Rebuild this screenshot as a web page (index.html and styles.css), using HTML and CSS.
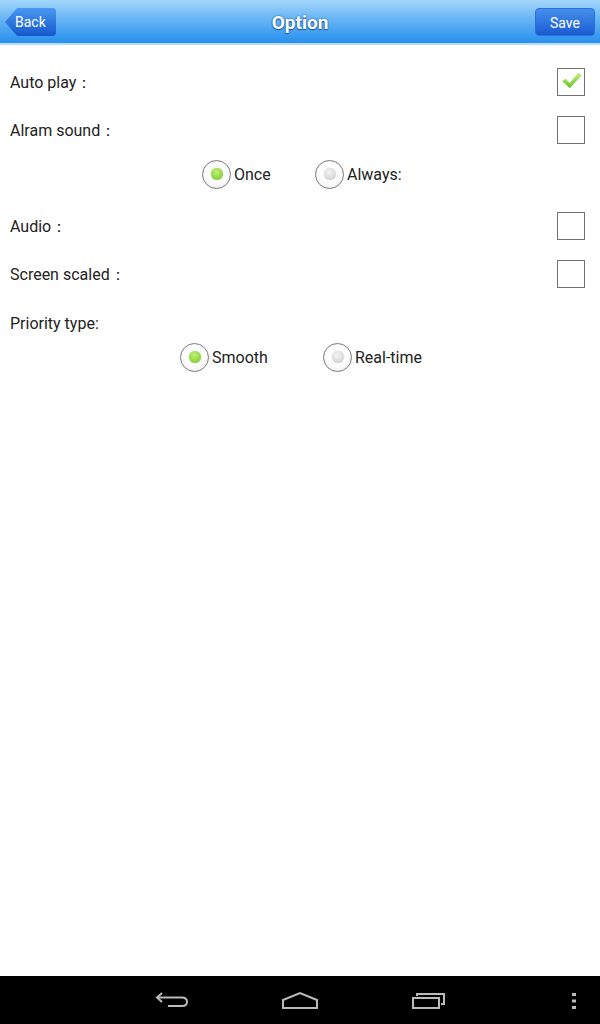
FILE: index.html
```html
<!DOCTYPE html>
<html lang="en">
<head>
    <meta charset="utf-8"/>
    <title>Option</title>
    <meta name="viewport" content="width=device-width, initial-scale=1.0"/>
    <link rel="stylesheet" href="styles.css">
</head>
<body>
<div id="app">
    <div class="topbar">
        <div class="btn-back"><span>Back</span></div>
        <div class="title">Option</div>
        <div class="btn-save">Save</div>
    </div>

    <div class="content">
        <div class="row">
            <span class="label">Auto play：</span>
            <span class="check on">
                <svg width="21" height="19" viewBox="0 0 24 22">
                    <defs>
                        <linearGradient id="g1" x1="0" y1="0" x2="0" y2="1">
                            <stop offset="0" stop-color="#c2f07e"/>
                            <stop offset="1" stop-color="#6cc22a"/>
                        </linearGradient>
                    </defs>
                    <path d="M1 12 L5 9 L10 14 L20 2 L24 5 L10 20 Z" fill="url(#g1)"/>
                </svg>
            </span>
        </div>
        <div class="row">
            <span class="label">Alram sound：</span>
            <span class="check"></span>
        </div>
        <div class="radios r1">
            <div class="opt"><span class="radio on"><i></i></span>Once</div>
            <div class="opt"><span class="radio"><i></i></span>Always:</div>
        </div>
        <div class="row">
            <span class="label">Audio：</span>
            <span class="check"></span>
        </div>
        <div class="row">
            <span class="label">Screen scaled：</span>
            <span class="check"></span>
        </div>
        <div class="row small">
            <span class="label">Priority type:</span>
        </div>
        <div class="radios r2">
            <div class="opt"><span class="radio on"><i></i></span>Smooth</div>
            <div class="opt"><span class="radio"><i></i></span>Real-time</div>
        </div>
    </div>

    <div class="navbar">
        <svg class="nav-back" width="36" height="20" viewBox="0 0 36 20">
            <path d="M8 3 L3 7.5 L8 12" fill="none" stroke="#bbb" stroke-width="2"/>
            <path d="M3 7.5 H28 Q33 7.5 33 12 Q33 16 28 16 H14" fill="none" stroke="#bbb" stroke-width="2"/>
        </svg>
        <svg class="nav-home" width="38" height="20" viewBox="0 0 38 20">
            <path d="M2 18 V10 L19 3 L36 10 V18 Z" fill="none" stroke="#bbb" stroke-width="2"/>
        </svg>
        <svg class="nav-recent" width="36" height="20" viewBox="0 0 36 20">
            <rect x="2" y="8" width="26" height="10" fill="none" stroke="#bbb" stroke-width="2"/>
            <path d="M6 6 V4 H33 V14 H30" fill="none" stroke="#bbb" stroke-width="2"/>
        </svg>
        <svg class="nav-menu" width="6" height="18" viewBox="0 0 6 18">
            <rect x="1" y="1" width="4" height="3" fill="#bbb"/>
            <rect x="1" y="7.5" width="4" height="3" fill="#bbb"/>
            <rect x="1" y="14" width="4" height="3" fill="#bbb"/>
        </svg>
    </div>
</div>
</body>
</html>
```

FILE: styles.css
```css
* {
    padding: 0;
    margin: 0;
    box-sizing: border-box;
}
body {
    width: 600px;
    height: 1024px;
    background: #fff;
    font-family: Roboto, "Liberation Sans", Arial, sans-serif;
    color: #222;
}
#app {
    height: 1024px;
    display: flex;
    flex-direction: column;
}

/* top bar */
.topbar {
    height: 45px;
    display: flex;
    align-items: center;
    justify-content: space-between;
    padding: 0 5px;
    background: linear-gradient(to bottom, #a4d6fb 0%, #66b4f5 45%, #2790ee 100%);
    border-bottom: 2px solid #bcdcf5;
    position: relative;
}
.title {
    position: absolute;
    left: 0;
    right: 0;
    top: 11px;
    text-align: center;
    color: #fff;
    font-size: 19px;
    font-weight: bold;
    text-shadow: 0 0 2px #1c4f93, 0 1px 1px #1c4f93;
}
.btn-back {
    width: 51px;
    height: 28px;
    margin-top: 1px;
    background: linear-gradient(to bottom, #4a98f2, #1458cc);
    clip-path: polygon(12px 0, 100% 0, 100% 100%, 12px 100%, 0 50%);
    border-radius: 0 4px 4px 0;
    color: #fff;
    font-size: 14px;
    display: flex;
    align-items: center;
    padding-left: 10px;
    position: relative;
    z-index: 1;
}
.btn-save {
    width: 60px;
    height: 28px;
    margin-top: 1px;
    background: linear-gradient(to bottom, #4590ee, #1a5ad0);
    border: 1px solid #2c6fd6;
    border-radius: 4px;
    color: #fff;
    font-size: 14px;
    padding-top: 2px;
    display: flex;
    align-items: center;
    justify-content: center;
    position: relative;
    z-index: 1;
}

/* option rows */
.content {
    flex: 1;
    padding-top: 13px;
}
.row {
    height: 48px;
    display: flex;
    align-items: center;
    justify-content: space-between;
    padding: 0 15px 0 10px;
}
.row.small {
    height: 36px;
    margin-top: 6px;
}
.label {
    font-size: 16px;
    padding-top: 2px;
}
.check {
    width: 28px;
    height: 28px;
    border: 1px solid #707070;
    display: flex;
    align-items: center;
    justify-content: center;
}
.check svg {
    margin-top: -3px;
    margin-left: 1px;
}

.radios {
    display: flex;
    align-items: center;
    font-size: 16px;
}
.r1 {
    height: 40px;
    padding-left: 202px;
    margin-bottom: 8px;
}
.r1 .opt:first-child { width: 113px; }
.r2 {
    height: 34px;
    padding-left: 180px;
}
.r2 .opt:first-child { width: 143px; }
.opt {
    display: flex;
    align-items: center;
}
.opt span + * {
    padding-top: 2px;
}
.radio {
    width: 29px;
    height: 29px;
    border-radius: 50%;
    border: 1px solid #7a7a7a;
    background: radial-gradient(circle at 50% 40%, #fff 40%, #ececec 100%);
    display: flex;
    align-items: center;
    justify-content: center;
    margin-right: 3px;
}
.radio i {
    width: 12px;
    height: 12px;
    border-radius: 50%;
    background: radial-gradient(circle at 45% 35%, #f4f4f4, #c8c8c8);
    box-shadow: 0 0 1px #aaa;
}
.radio.on i {
    background: radial-gradient(circle at 45% 35%, #c5f07a, #6cc51e);
    box-shadow: 0 0 1px #5a9d1a;
}

/* bottom nav */
.navbar {
    height: 48px;
    background: #000;
    position: relative;
}
.navbar svg {
    position: absolute;
}
.nav-back { left: 154px; top: 14px; }
.nav-home { left: 281px; top: 14px; }
.nav-recent { left: 411px; top: 14px; }
.nav-menu { left: 571px; top: 16px; }
```
